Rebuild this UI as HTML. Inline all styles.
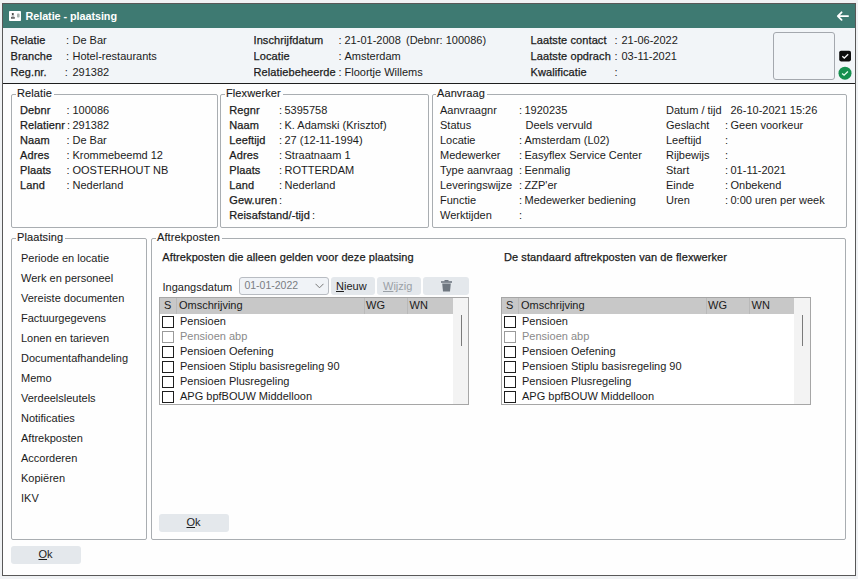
<!DOCTYPE html><html><head><meta charset="utf-8"><style>
*{margin:0;padding:0;box-sizing:border-box}
html,body{width:858px;height:579px;overflow:hidden;background:#f0f2f4;font-family:"Liberation Sans",sans-serif;font-size:11px;color:#1b1b1b}
div{position:absolute}
.t{white-space:nowrap;line-height:13px}
.m{-webkit-text-stroke:0.25px #1b1b1b;letter-spacing:0.1px}
.lg{-webkit-text-stroke:0.12px #1b1b1b;letter-spacing:0.1px}
.g{color:#8a8a8a}
.grp{border:1px solid #a9adb1;border-radius:2px}
.leg{background:#fefefe;padding:0 2px 0 1px}
.btn{background:#e4e8ec;border-radius:3px}
.cb{border:1px solid #1e1e1e;width:12px;height:12px}
.cbd{border:1px solid #9a9a9a;width:12px;height:12px}
</style></head><body><div class="" style="left:2px;top:3px;width:854px;height:573px;border:1px solid #585858;background:#fefefe"></div>
<div class="" style="left:3px;top:4px;width:852px;height:24px;background:#3e7a72"></div>
<div class="" style="left:3px;top:28px;width:852px;height:55px;background:#f2f5f8"></div>
<div class="" style="left:3px;top:83px;width:852px;height:1px;background:#1e1e1e"></div>
<svg style="position:absolute;left:9px;top:11px" width="12" height="10" viewBox="0 0 12 10"><rect x="0" y="0" width="12" height="10" rx="0.8" fill="#fff"/><rect x="2.9" y="2" width="1.8" height="2" rx="0.6" fill="#4a4a4a"/><rect x="2" y="6.2" width="3.8" height="1.4" fill="#3a3a3a"/><rect x="2.6" y="4.2" width="2.6" height="2" fill="#bbb"/><rect x="8" y="2.6" width="2.6" height="4" rx="0.8" fill="#a8b2ae"/></svg>
<div class="t " style="left:25.5px;top:10px;color:#fff;font-weight:bold;font-size:10.8px;letter-spacing:-0.05px">Relatie - plaatsing</div>
<svg style="position:absolute;left:835px;top:10px" width="15" height="12" viewBox="0 0 15 12"><path d="M2.8 6.1 H13.1 M6.6 2.3 L2.8 6.1 L6.6 9.9" stroke="#fff" stroke-width="1.8" fill="none" stroke-linecap="round" stroke-linejoin="round"/></svg>
<div class="t m" style="left:10.5px;top:34px;">Relatie</div>
<div class="t " style="left:66px;top:34px;">:</div>
<div class="t " style="left:72.5px;top:34px;">De Bar</div>
<div class="t m" style="left:10.5px;top:50px;">Branche</div>
<div class="t " style="left:66px;top:50px;">:</div>
<div class="t " style="left:72.5px;top:50px;">Hotel-restaurants</div>
<div class="t m" style="left:10.5px;top:66px;">Reg.nr.</div>
<div class="t " style="left:64.8px;top:66px;">:</div>
<div class="t " style="left:72.5px;top:66px;">291382</div>
<div class="t m" style="left:253.5px;top:34px;width:82px;overflow:hidden">Inschrijfdatum</div>
<div class="t " style="left:338.5px;top:34px;">:</div>
<div class="t " style="left:344.5px;top:34px;">21-01-2008</div>
<div class="t m" style="left:253.5px;top:50px;width:82px;overflow:hidden">Locatie</div>
<div class="t " style="left:338.5px;top:50px;">:</div>
<div class="t " style="left:344.5px;top:50px;">Amsterdam</div>
<div class="t m" style="left:253.5px;top:66px;width:82px;overflow:hidden">Relatiebeheerder</div>
<div class="t " style="left:338.5px;top:66px;">:</div>
<div class="t " style="left:344.5px;top:66px;">Floortje Willems</div>
<div class="t " style="left:406px;top:34px;">(Debnr: 100086)</div>
<div class="t m" style="left:530.5px;top:34px;">Laatste contact</div>
<div class="t " style="left:614.5px;top:34px;">:</div>
<div class="t " style="left:621.5px;top:34px;">21-06-2022</div>
<div class="t m" style="left:530.5px;top:50px;">Laatste opdrach</div>
<div class="t " style="left:614.5px;top:50px;">:</div>
<div class="t " style="left:621.5px;top:50px;">03-11-2021</div>
<div class="t m" style="left:530.5px;top:66px;">Kwalificatie</div>
<div class="t " style="left:614.5px;top:66px;">:</div>
<div class="t " style="left:621.5px;top:66px;"></div>
<div class="" style="left:773px;top:32px;width:62px;height:48px;border:1px solid #a4a8ae;border-radius:3px;background:#f2f5f8"></div>
<svg style="position:absolute;left:838px;top:49px" width="15" height="14" viewBox="0 0 15 14"><rect x="1.2" y="1.8" width="11.8" height="10.6" rx="1.8" fill="#0d0d0d"/><path d="M4.3 7.2 L6.3 9 L10.2 5.2" stroke="#f4f4f4" stroke-width="1.3" fill="none"/></svg>
<svg style="position:absolute;left:838px;top:66px" width="15" height="15" viewBox="0 0 15 15"><circle cx="7" cy="7.2" r="6.5" fill="#16904f"/><path d="M4.1 7.4 L6.1 9.2 L9.9 5.5" stroke="#e8fff0" stroke-width="1.3" fill="none"/></svg>
<div class="grp" style="left:11px;top:94px;width:207px;height:134px;"></div>
<div class="t leg lg" style="left:16px;top:87px;">Relatie</div>
<div class="grp" style="left:220px;top:94px;width:209px;height:134px;"></div>
<div class="t leg lg" style="left:225px;top:87px;">Flexwerker</div>
<div class="grp" style="left:432px;top:94px;width:415px;height:134px;"></div>
<div class="t leg lg" style="left:436px;top:87px;">Aanvraag</div>
<div class="t m" style="left:20px;top:103.5px;">Debnr</div>
<div class="t " style="left:66.5px;top:103.5px;">:</div>
<div class="t " style="left:72.5px;top:103.5px;">100086</div>
<div class="t m" style="left:20px;top:118.5px;">Relatienr</div>
<div class="t " style="left:67px;top:118.5px;">:</div>
<div class="t " style="left:72.5px;top:118.5px;">291382</div>
<div class="t m" style="left:20px;top:133.5px;">Naam</div>
<div class="t " style="left:66.5px;top:133.5px;">:</div>
<div class="t " style="left:72.5px;top:133.5px;">De Bar</div>
<div class="t m" style="left:20px;top:148.5px;">Adres</div>
<div class="t " style="left:66.5px;top:148.5px;">:</div>
<div class="t " style="left:72.5px;top:148.5px;">Krommebeemd 12</div>
<div class="t m" style="left:20px;top:163.5px;">Plaats</div>
<div class="t " style="left:66.5px;top:163.5px;">:</div>
<div class="t " style="left:72.5px;top:163.5px;">OOSTERHOUT NB</div>
<div class="t m" style="left:20px;top:178.5px;">Land</div>
<div class="t " style="left:66.5px;top:178.5px;">:</div>
<div class="t " style="left:72.5px;top:178.5px;">Nederland</div>
<div class="t m" style="left:229.3px;top:103.5px;">Regnr</div>
<div class="t " style="left:279px;top:103.5px;">:</div>
<div class="t " style="left:284.5px;top:103.5px;">5395758</div>
<div class="t m" style="left:229.3px;top:118.5px;">Naam</div>
<div class="t " style="left:279px;top:118.5px;">:</div>
<div class="t " style="left:284.5px;top:118.5px;">K. Adamski (Krisztof)</div>
<div class="t m" style="left:229.3px;top:133.5px;">Leeftijd</div>
<div class="t " style="left:279px;top:133.5px;">:</div>
<div class="t " style="left:284.5px;top:133.5px;">27 (12-11-1994)</div>
<div class="t m" style="left:229.3px;top:148.5px;">Adres</div>
<div class="t " style="left:279px;top:148.5px;">:</div>
<div class="t " style="left:284.5px;top:148.5px;">Straatnaam 1</div>
<div class="t m" style="left:229.3px;top:163.5px;">Plaats</div>
<div class="t " style="left:279px;top:163.5px;">:</div>
<div class="t " style="left:284.5px;top:163.5px;">ROTTERDAM</div>
<div class="t m" style="left:229.3px;top:178.5px;">Land</div>
<div class="t " style="left:279px;top:178.5px;">:</div>
<div class="t " style="left:284.5px;top:178.5px;">Nederland</div>
<div class="t m" style="left:229.3px;top:193.5px;">Gew.uren</div>
<div class="t " style="left:279px;top:193.5px;">:</div>
<div class="t " style="left:284.5px;top:193.5px;"></div>
<div class="t m" style="left:229.3px;top:208.5px;">Reisafstand/-tijd</div>
<div class="t " style="left:312px;top:208.5px;">:</div>
<div class="t " style="left:284.5px;top:208.5px;"></div>
<div class="t " style="left:440px;top:103.5px;">Aanvraagnr</div>
<div class="t " style="left:519px;top:103.5px;">:</div>
<div class="t " style="left:524.5px;top:103.5px;">1920235</div>
<div class="t " style="left:440px;top:118.5px;">Status</div>
<div class="t " style="left:525.5px;top:118.5px;">Deels vervuld</div>
<div class="t " style="left:440px;top:133.5px;">Locatie</div>
<div class="t " style="left:519px;top:133.5px;">:</div>
<div class="t " style="left:524.5px;top:133.5px;">Amsterdam (L02)</div>
<div class="t " style="left:440px;top:148.5px;">Medewerker</div>
<div class="t " style="left:519px;top:148.5px;">:</div>
<div class="t " style="left:524.5px;top:148.5px;">Easyflex Service Center</div>
<div class="t " style="left:440px;top:163.5px;">Type aanvraag</div>
<div class="t " style="left:519px;top:163.5px;">:</div>
<div class="t " style="left:524.5px;top:163.5px;">Eenmalig</div>
<div class="t " style="left:440px;top:178.5px;">Leveringswijze</div>
<div class="t " style="left:519px;top:178.5px;">:</div>
<div class="t " style="left:524.5px;top:178.5px;">ZZP'er</div>
<div class="t " style="left:440px;top:193.5px;">Functie</div>
<div class="t " style="left:519px;top:193.5px;">:</div>
<div class="t " style="left:524.5px;top:193.5px;">Medewerker bediening</div>
<div class="t " style="left:440px;top:208.5px;">Werktijden</div>
<div class="t " style="left:519px;top:208.5px;">:</div>
<div class="t " style="left:524.5px;top:208.5px;"></div>
<div class="t " style="left:666px;top:103.5px;">Datum / tijd</div>
<div class="t " style="left:730.5px;top:103.5px;">26-10-2021 15:26</div>
<div class="t " style="left:666px;top:118.5px;">Geslacht</div>
<div class="t " style="left:725px;top:118.5px;">:</div>
<div class="t " style="left:730.5px;top:118.5px;">Geen voorkeur</div>
<div class="t " style="left:666px;top:133.5px;">Leeftijd</div>
<div class="t " style="left:725px;top:133.5px;">:</div>
<div class="t " style="left:730.5px;top:133.5px;"></div>
<div class="t " style="left:666px;top:148.5px;">Rijbewijs</div>
<div class="t " style="left:725px;top:148.5px;">:</div>
<div class="t " style="left:730.5px;top:148.5px;"></div>
<div class="t " style="left:666px;top:163.5px;">Start</div>
<div class="t " style="left:725px;top:163.5px;">:</div>
<div class="t " style="left:730.5px;top:163.5px;">01-11-2021</div>
<div class="t " style="left:666px;top:178.5px;">Einde</div>
<div class="t " style="left:725px;top:178.5px;">:</div>
<div class="t " style="left:730.5px;top:178.5px;">Onbekend</div>
<div class="t " style="left:666px;top:193.5px;">Uren</div>
<div class="t " style="left:725px;top:193.5px;">:</div>
<div class="t " style="left:730.5px;top:193.5px;">0:00 uren per week</div>
<div class="grp" style="left:11px;top:238px;width:136px;height:302px;"></div>
<div class="t leg lg" style="left:16px;top:231px;">Plaatsing</div>
<div class="t " style="left:21px;top:251.5px;">Periode en locatie</div>
<div class="t " style="left:21px;top:271.5px;">Werk en personeel</div>
<div class="t " style="left:21px;top:291.5px;">Vereiste documenten</div>
<div class="t " style="left:21px;top:311.5px;">Factuurgegevens</div>
<div class="t " style="left:21px;top:331.5px;">Lonen en tarieven</div>
<div class="t " style="left:21px;top:351.5px;">Documentafhandeling</div>
<div class="t " style="left:21px;top:371.5px;">Memo</div>
<div class="t " style="left:21px;top:391.5px;">Verdeelsleutels</div>
<div class="t " style="left:21px;top:411.5px;">Notificaties</div>
<div class="t " style="left:21px;top:431.5px;">Aftrekposten</div>
<div class="t " style="left:21px;top:451.5px;">Accorderen</div>
<div class="t " style="left:21px;top:471.5px;">Kopi&euml;ren</div>
<div class="t " style="left:21px;top:491.5px;">IKV</div>
<div class="grp" style="left:151px;top:238px;width:695px;height:302px;"></div>
<div class="t leg lg" style="left:156px;top:231px;">Aftrekposten</div>
<div class="t m" style="left:162.3px;top:250.60000000000002px;">Aftrekposten die alleen gelden voor deze plaatsing</div>
<div class="t m" style="left:503.9px;top:250.60000000000002px;">De standaard aftrekposten van de flexwerker</div>
<div class="t " style="left:162.5px;top:280.5px;">Ingangsdatum</div>
<div class="" style="left:239px;top:277px;width:90px;height:18px;border:1px solid #b8bcc2;border-radius:3px;background:#f0f3f7"></div>
<div class="t g" style="left:244.4px;top:279px;font-size:10.5px;color:#7a7d82">01-01-2022</div>
<svg style="position:absolute;left:315px;top:283px" width="9" height="6" viewBox="0 0 9 6"><path d="M0.5 0.8 L4.5 4.8 L8.5 0.8" stroke="#777" stroke-width="1" fill="none"/></svg>
<div class="btn" style="left:331px;top:277px;width:43.5px;height:18px;"></div>
<div class="t " style="left:336px;top:280px;"><u>N</u>ieuw</div>
<div class="btn" style="left:377px;top:277px;width:43.5px;height:18px;"></div>
<div class="t " style="left:383px;top:280px;color:#9aa0a6"><u>W</u>ijzig</div>
<div class="btn" style="left:423px;top:277px;width:46px;height:18px;"></div>
<svg style="position:absolute;left:441px;top:280px" width="11" height="12" viewBox="0 0 11 12"><rect x="0" y="1.2" width="11" height="1.6" fill="#6f7780"/><rect x="3.5" y="0" width="4" height="1.5" fill="#6f7780"/><path d="M1.2 3.6 H9.8 L9 11.5 H2 Z" fill="#6f7780"/></svg>
<div class="" style="left:159px;top:297px;width:310px;height:107.5px;border:1px solid #a6a6a6;background:#fff"></div>
<div class="" style="left:160px;top:298px;width:293px;height:16px;background:#c8c8c8"></div>
<div class="" style="left:176px;top:298px;width:1px;height:16px;background:#b9b9b9"></div>
<div class="" style="left:363.5px;top:298px;width:1.0px;height:16px;background:#b9b9b9"></div>
<div class="" style="left:407.0px;top:298px;width:1.0px;height:16px;background:#b9b9b9"></div>
<div class="" style="left:453px;top:298px;width:15px;height:105.5px;background:#f3f3f3"></div>
<div class="" style="left:461px;top:315px;width:1px;height:31px;background:#7a7a7a"></div>
<div class="t " style="left:164px;top:299px;">S</div>
<div class="t " style="left:179px;top:299px;">Omschrijving</div>
<div class="t " style="left:366px;top:299px;">WG</div>
<div class="t " style="left:409.5px;top:299px;">WN</div>
<div class="cb" style="left:162px;top:316px;width:12px;height:12px;"></div>
<div class="t " style="left:180px;top:315px;">Pensioen</div>
<div class="cbd" style="left:162px;top:331px;width:12px;height:12px;"></div>
<div class="t g" style="left:180px;top:330px;">Pensioen abp</div>
<div class="cb" style="left:162px;top:346px;width:12px;height:12px;"></div>
<div class="t " style="left:180px;top:345px;">Pensioen Oefening</div>
<div class="cb" style="left:162px;top:361px;width:12px;height:12px;"></div>
<div class="t " style="left:180px;top:360px;">Pensioen Stiplu basisregeling 90</div>
<div class="cb" style="left:162px;top:376px;width:12px;height:12px;"></div>
<div class="t " style="left:180px;top:375px;">Pensioen Plusregeling</div>
<div class="cb" style="left:162px;top:391px;width:12px;height:12px;"></div>
<div class="t " style="left:180px;top:390px;">APG bpfBOUW Middelloon</div>
<div class="" style="left:501px;top:297px;width:310px;height:107.5px;border:1px solid #a6a6a6;background:#fff"></div>
<div class="" style="left:502px;top:298px;width:292px;height:16px;background:#c8c8c8"></div>
<div class="" style="left:518px;top:298px;width:1px;height:16px;background:#b9b9b9"></div>
<div class="" style="left:705.5px;top:298px;width:1.0px;height:16px;background:#b9b9b9"></div>
<div class="" style="left:749.0px;top:298px;width:1.0px;height:16px;background:#b9b9b9"></div>
<div class="" style="left:794px;top:298px;width:16px;height:105.5px;background:#f3f3f3"></div>
<div class="" style="left:802px;top:315px;width:1px;height:31px;background:#7a7a7a"></div>
<div class="t " style="left:506px;top:299px;">S</div>
<div class="t " style="left:521px;top:299px;">Omschrijving</div>
<div class="t " style="left:708px;top:299px;">WG</div>
<div class="t " style="left:751.5px;top:299px;">WN</div>
<div class="cb" style="left:504px;top:316px;width:12px;height:12px;"></div>
<div class="t " style="left:522px;top:315px;">Pensioen</div>
<div class="cbd" style="left:504px;top:331px;width:12px;height:12px;"></div>
<div class="t g" style="left:522px;top:330px;">Pensioen abp</div>
<div class="cb" style="left:504px;top:346px;width:12px;height:12px;"></div>
<div class="t " style="left:522px;top:345px;">Pensioen Oefening</div>
<div class="cb" style="left:504px;top:361px;width:12px;height:12px;"></div>
<div class="t " style="left:522px;top:360px;">Pensioen Stiplu basisregeling 90</div>
<div class="cb" style="left:504px;top:376px;width:12px;height:12px;"></div>
<div class="t " style="left:522px;top:375px;">Pensioen Plusregeling</div>
<div class="cb" style="left:504px;top:391px;width:12px;height:12px;"></div>
<div class="t " style="left:522px;top:390px;">APG bpfBOUW Middelloon</div>
<div class="btn" style="left:159px;top:514px;width:70px;height:18px;"></div>
<div class="t " style="left:186.5px;top:516px;"><u>O</u>k</div>
<div class="btn" style="left:11px;top:546px;width:70px;height:18px;"></div>
<div class="t " style="left:38.5px;top:548px;"><u>O</u>k</div></body></html>
